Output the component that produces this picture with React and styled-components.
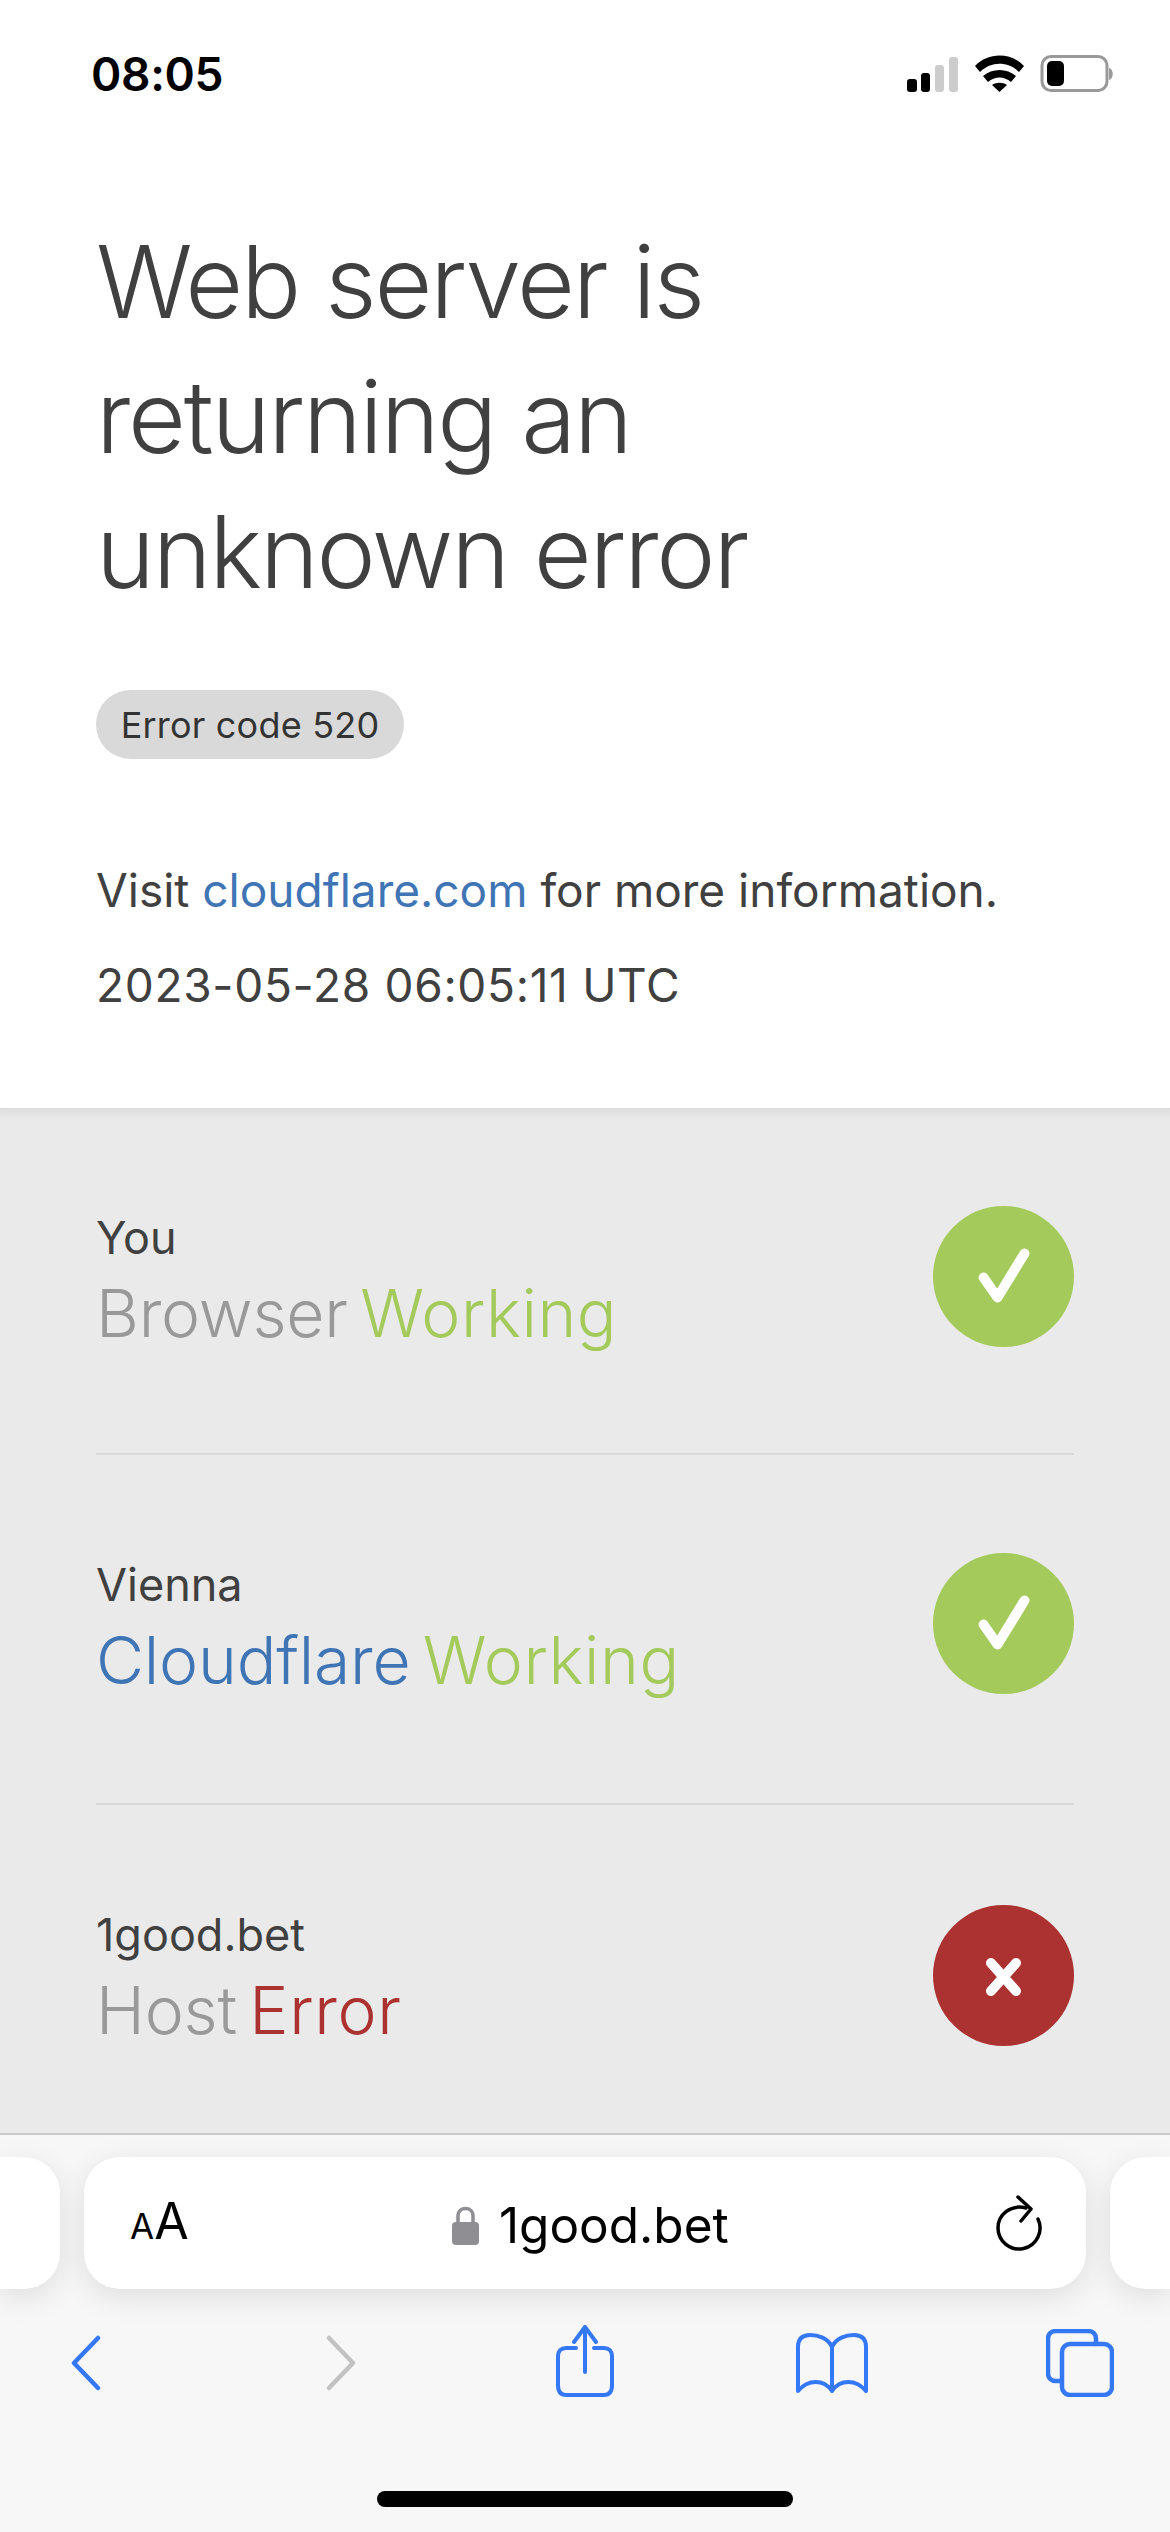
import React from 'react';
import styled, { createGlobalStyle } from 'styled-components';

const Global = createGlobalStyle`
  html, body { margin: 0; padding: 0; background: #fff; }
  * { box-sizing: border-box; }
  body { font-family: Inter, "Liberation Sans", sans-serif; }
`;

const Screen = styled.div`
  width: 1170px;
  height: 2532px;
  display: flex;
  flex-direction: column;
  overflow: hidden;
  background: #fff;
`;

const StatusBar = styled.header`
  height: 130px;
  flex: none;
  padding: 48px 56px 0 91px;
  display: flex;
  justify-content: space-between;
  align-items: flex-start;
`;
const Time = styled.span`
  font-size: 46px;
  line-height: 52px;
  font-weight: 600;
  letter-spacing: -0.3px;
  color: #000;
`;
const StatusIcons = styled.div`
  display: flex;
  align-items: flex-start;
  margin-top: 7px;
`;

const Hero = styled.section`
  flex: none;
  height: 978px;
  padding: 84px 96px 0;
  color: #404040;
`;
const Title = styled.h1`
  margin: 0;
  font-size: 100px;
  line-height: 135px;
  font-weight: 300;
  letter-spacing: -2.2px;
  color: #404040;
`;
const CodePill = styled.div`
  margin-top: 71px;
  width: 308px;
  height: 69px;
  border-radius: 35px;
  background: #d9d9d9;
  color: #333;
  font-size: 36px;
  letter-spacing: 0.2px;
  display: flex;
  align-items: center;
  justify-content: center;
`;
const Info = styled.p`
  margin: ${(p) => p.$top}px 0 0;
  font-size: 46px;
  line-height: 60px;
  letter-spacing: ${(p) => p.$spacing || 0}px;
  color: #404040;
  white-space: nowrap;
`;
const Link = styled.span`
  color: #3f75b5;
`;

const Status = styled.main`
  flex: 1;
  min-height: 0;
  padding: 0 96px;
  background: #eaeaea;
  box-shadow: inset 0 14px 12px -12px rgba(0, 0, 0, 0.1);
`;
const Row = styled.div`
  height: ${(p) => p.$h}px;
  padding-top: 98px;
  display: flex;
  justify-content: space-between;
  align-items: flex-start;
  border-bottom: ${(p) => (p.$last ? 'none' : '2px solid #d9d9d9')};
`;
const RowText = styled.div`
  padding-top: 2px;
`;
const Location = styled.div`
  font-size: 45px;
  line-height: 60px;
  color: #404040;
`;
const Service = styled.div`
  font-size: 66px;
  line-height: 90px;
  font-weight: 300;
  word-spacing: -6px;
  letter-spacing: -0.2px;
  color: ${(p) => p.$color};
  white-space: nowrap;
`;
const Word = styled.span`
  color: ${(p) => p.$color};
  letter-spacing: 0.6px;
`;
const Badge = styled.div`
  width: 141px;
  height: 141px;
  margin-top: ${(p) => p.$drop || 0}px;
  border-radius: 50%;
  background: ${(p) => p.$color};
  display: flex;
  align-items: center;
  justify-content: center;
  flex: none;
`;

const Browser = styled.footer`
  flex: none;
  height: 399px;
  background: #f7f7f7;
  border-top: 2px solid #c9c9c9;
  display: flex;
  flex-direction: column;
  align-items: center;
`;
const AddressTrack = styled.div`
  align-self: stretch;
  margin-top: 22px;
  height: 132px;
  display: grid;
  grid-template-columns: 60px 1002px 60px;
  column-gap: 24px;
  flex: none;
`;
const SidePill = styled.div`
  background: #fff;
  box-shadow: 0 8px 30px rgba(0, 0, 0, 0.1);
  border-radius: ${(p) => (p.$side === 'left' ? '0 36px 36px 0' : '36px 0 0 36px')};
`;
const Address = styled.div`
  background: #fff;
  border-radius: 36px;
  box-shadow: 0 8px 30px rgba(0, 0, 0, 0.1);
  display: flex;
  align-items: center;
  justify-content: space-between;
  padding: 0 44px 0 46px;
  color: #000;
`;
const TextSize = styled.div`
  display: flex;
  align-items: baseline;
  font-size: 50px;
  line-height: 60px;
  font-weight: 400;
`;
const SmallA = styled.span`
  font-size: 35px;
`;
const Domain = styled.div`
  display: flex;
  align-items: center;
  gap: 20px;
  font-size: 49.5px;
  line-height: 60px;
  font-weight: 400;
  margin: 4px 4px 0 0;
`;
const Toolbar = styled.nav`
  align-self: stretch;
  flex: none;
  margin-top: 38px;
  height: 71px;
  display: grid;
  grid-template-columns: 172px 338px 150px 344px 152px;
  justify-items: center;
  align-items: center;
`;
const ToolIcon = styled.svg`
  display: block;
  fill: none;
  stroke: ${(p) => p.$color || '#3478f6'};
  stroke-width: ${(p) => p.$weight || 4}px;
  stroke-linecap: round;
  stroke-linejoin: round;
  margin-top: ${(p) => p.$lift || 0}px;
`;
const HomeBar = styled.div`
  margin-top: 93px;
  width: 416px;
  height: 16px;
  border-radius: 8px;
  background: #000;
  flex: none;
`;

const Mark = ({ d }) => (
  <svg width="70" height="70" viewBox="0 0 70 70" fill="none" stroke="#fff" strokeWidth="10" strokeLinecap="round" strokeLinejoin="round">
    <path d={d} />
  </svg>
);

const rows = [
  { place: 'You', name: 'Browser', nameColor: '#999999', state: 'Working', stateColor: '#a3ca5a', h: 347, ok: true, drop: 0 },
  { place: 'Vienna', name: 'Cloudflare', nameColor: '#3f75b5', state: 'Working', stateColor: '#a3ca5a', h: 350, ok: true, drop: 0 },
  { place: '1good.bet', name: 'Host', nameColor: '#999999', state: 'Error', stateColor: '#ab3230', h: 320, ok: false, drop: 2 },
];

export default function App() {
  return (
    <Screen>
      <Global />
      <StatusBar>
        <Time>08:05</Time>
        <StatusIcons>
          <svg width="207" height="40" viewBox="0 0 207 40">
            <rect x="0" y="24" width="10" height="13" rx="3" fill="#000" />
            <rect x="14" y="18" width="9" height="19" rx="3" fill="#000" />
            <rect x="28" y="10" width="9" height="27" rx="3" fill="#ccc" />
            <rect x="42" y="2" width="9" height="35" rx="3" fill="#ccc" />
            <path d="M68 11 C 81 -3, 104 -3, 117 11 L 112 17 C 101 6, 84 6, 73 17 Z" fill="#000" />
            <path d="M76 21 C 85 13, 100 13, 109 21 L 104 27 C 97 21, 88 21, 81 27 Z" fill="#000" />
            <path d="M85 30 C 89 27, 96 27, 100 30 L 92.5 37 Z" fill="#000" />
            <rect x="135" y="1.5" width="65" height="34" rx="9" fill="none" stroke="#999" strokeWidth="3" />
            <rect x="140" y="6" width="17" height="25" rx="5" fill="#000" />
            <path d="M202 13 C 207 14, 207 24, 202 25 Z" fill="#999" />
          </svg>
        </StatusIcons>
      </StatusBar>

      <Hero>
        <Title>
          Web server is
          <br />
          returning an
          <br />
          unknown error
        </Title>
        <CodePill>Error code 520</CodePill>
        <Info $top={101}>
          Visit <Link>cloudflare.com</Link> for more information.
        </Info>
        <Info $top={35} $spacing={0.7}>2023-05-28 06:05:11 UTC</Info>
      </Hero>

      <Status>
        {rows.map((r, i) => (
          <Row key={r.place} $h={r.h} $last={i === rows.length - 1}>
            <RowText>
              <Location>{r.place}</Location>
              <Service $color={r.nameColor}>
                {r.name} <Word $color={r.stateColor}>{r.state}</Word>
              </Service>
            </RowText>
            <Badge $color={r.ok ? '#a3ca5a' : '#ab3230'} $drop={r.drop}>
              {r.ok ? <Mark d="M14.5 35.5 L 28.5 55.5 L 55.5 11.5" /> : <Mark d="M22 22 L 47 50 M47 22 L 22 50" />}
            </Badge>
          </Row>
        ))}
      </Status>

      <Browser>
        <AddressTrack>
          <SidePill $side="left" />
          <Address>
            <TextSize>
              <SmallA>A</SmallA>A
            </TextSize>
            <Domain>
              <svg width="27" height="40" viewBox="0 0 27 40">
                <path d="M6 18 V11 C6 1, 21 1, 21 11 V18" fill="none" stroke="#8e8e93" strokeWidth="3.5" />
                <rect x="0" y="17" width="27" height="23" rx="4" fill="#8e8e93" />
              </svg>
              1good.bet
            </Domain>
            <svg width="46" height="56" viewBox="0 0 46 56" fill="none" stroke="#000" strokeWidth="3.5" strokeLinecap="round" strokeLinejoin="round">
              <path d="M30 13 C 14 9, 2 20, 2 33 A 21 21 0 1 0 42 24" />
              <path d="M22 2 L 35 14 L 25 26" />
            </svg>
          </Address>
          <SidePill $side="right" />
        </AddressTrack>
        <Toolbar>
          <ToolIcon width="30" height="56" viewBox="0 0 30 56" $weight={4.5}>
            <path d="M27 3 L 3 28 L 27 53" />
          </ToolIcon>
          <ToolIcon width="30" height="56" viewBox="0 0 30 56" $weight={4.5} $color="#c2c2c2">
            <path d="M3 3 L 27 28 L 3 53" />
          </ToolIcon>
          <ToolIcon width="58" height="72" viewBox="0 0 58 72" $lift={-4}>
            <path d="M20 23 H10 C 5 23, 2 26, 2 31 V60 C 2 67, 5 70, 10 70 H48 C 53 70, 56 67, 56 60 V31 C 56 26, 53 23, 48 23 H38" />
            <path d="M29 47 V2 M18 17 L 29 2 L 40 17" />
          </ToolIcon>
          <ToolIcon width="72" height="60" viewBox="0 0 72 60">
            <path d="M36 14 C 32 5, 22 2, 14 2 C 6 2, 2 6, 2 14 V58 C 12 46, 28 46, 36 58 C 44 46, 60 46, 70 58 V14 C 70 6, 66 2, 58 2 C 50 2, 40 5, 36 14 Z M36 14 V58" />
          </ToolIcon>
          <ToolIcon width="68" height="68" viewBox="0 0 68 68" $weight={4.5}>
            <path d="M15 52 H10 C 5 52, 2 49, 2 44 V10 C 2 5, 5 2, 10 2 H42 C 47 2, 50 5, 50 10 V15" />
            <rect x="16" y="15" width="50" height="51" rx="8" />
          </ToolIcon>
        </Toolbar>
        <HomeBar />
      </Browser>
    </Screen>
  );
}
